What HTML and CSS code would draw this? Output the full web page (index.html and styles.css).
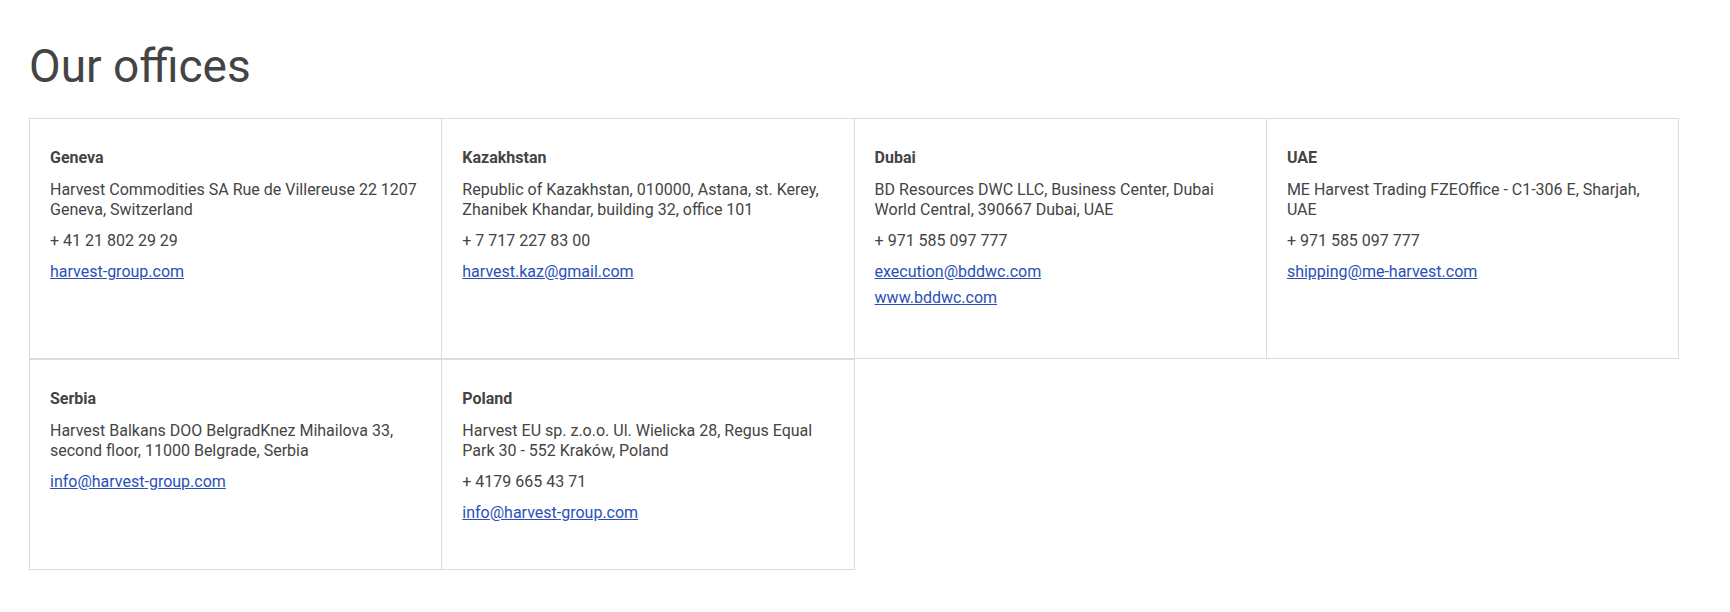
FILE: index.html
```html
<!DOCTYPE html>
<html lang="en">
<head>
    <meta charset="UTF-8">
    <meta name="viewport" content="width=device-width, initial-scale=1.0">
    <title>Our offices</title>
    <link rel="stylesheet" href="styles.css">
</head>
<body>
    <section class="offices">
        <h1 class="offices-title">Our offices</h1>
        <div class="offices-grid">
            <div class="office">
                <h3>Geneva</h3>
                <p>Harvest Commodities SA Rue de Villereuse 22 1207 Geneva, Switzerland</p>
                <p>+ 41 21 802 29 29</p>
                <div class="links">
                    <a href="#">harvest-group.com</a>
                </div>
            </div>
            <div class="office">
                <h3>Kazakhstan</h3>
                <p>Republic of Kazakhstan, 010000, Astana, st. Kerey, Zhanibek Khandar, building 32, office 101</p>
                <p>+ 7 717 227 83 00</p>
                <div class="links">
                    <a href="#">harvest.kaz@gmail.com</a>
                </div>
            </div>
            <div class="office">
                <h3>Dubai</h3>
                <p>BD Resources DWC LLC, Business Center, Dubai World Central, 390667 Dubai, UAE</p>
                <p>+ 971 585 097 777</p>
                <div class="links">
                    <a href="#">execution@bddwc.com</a>
                    <a href="#">www.bddwc.com</a>
                </div>
            </div>
            <div class="office">
                <h3>UAE</h3>
                <p>ME Harvest Trading FZEOffice - C1-306 E, Sharjah, UAE</p>
                <p>+ 971 585 097 777</p>
                <div class="links">
                    <a href="#">shipping@me-harvest.com</a>
                </div>
            </div>
            <div class="office">
                <h3>Serbia</h3>
                <p>Harvest Balkans DOO BelgradKnez Mihailova 33, second floor, 11000 Belgrade, Serbia</p>
                <div class="links">
                    <a href="#">info@harvest-group.com</a>
                </div>
            </div>
            <div class="office">
                <h3>Poland</h3>
                <p>Harvest EU sp. z.o.o. Ul. Wielicka 28, Regus Equal Park 30 - 552 Kraków, Poland</p>
                <p>+ 4179 665 43 71</p>
                <div class="links">
                    <a href="#">info@harvest-group.com</a>
                </div>
            </div>
        </div>
    </section>
</body>
</html>
```

FILE: styles.css
```css
body {
    font-family: Roboto, "Liberation Sans", Arial, sans-serif;
    margin: 0;
    padding: 0;
    color: #444;
    background: #fff;
}

.offices {
    padding: 38px 0 40px 29px;
}

.offices-title {
    font-size: 46px;
    font-weight: 400;
    line-height: 56px;
    margin: 0 0 24px;
    color: #444;
}

.offices-grid {
    display: grid;
    grid-template-columns: repeat(4, 412.3px);
    grid-template-rows: 241px auto;
}

.office {
    box-sizing: border-box;
    width: 413.3px;
    margin-right: -1px;
    border: 1px solid #dcdcdc;
    padding: 29px 20px 26px;
}

.office h3 {
    font-size: 16px;
    font-weight: 700;
    line-height: 20px;
    margin: 0 0 12px;
}

.office p {
    font-size: 16px;
    line-height: 20px;
    margin: 0 0 11px;
}

.links {
    display: flex;
    flex-direction: column;
    align-items: flex-start;
    gap: 6px;
    margin-top: 11px;
    margin-bottom: 20px;
}

.office p:has(+ .links) {
    margin-bottom: 0;
}

.links a {
    font-size: 16px;
    line-height: 20px;
    color: #2a50b8;
    text-decoration: underline;
}
```
